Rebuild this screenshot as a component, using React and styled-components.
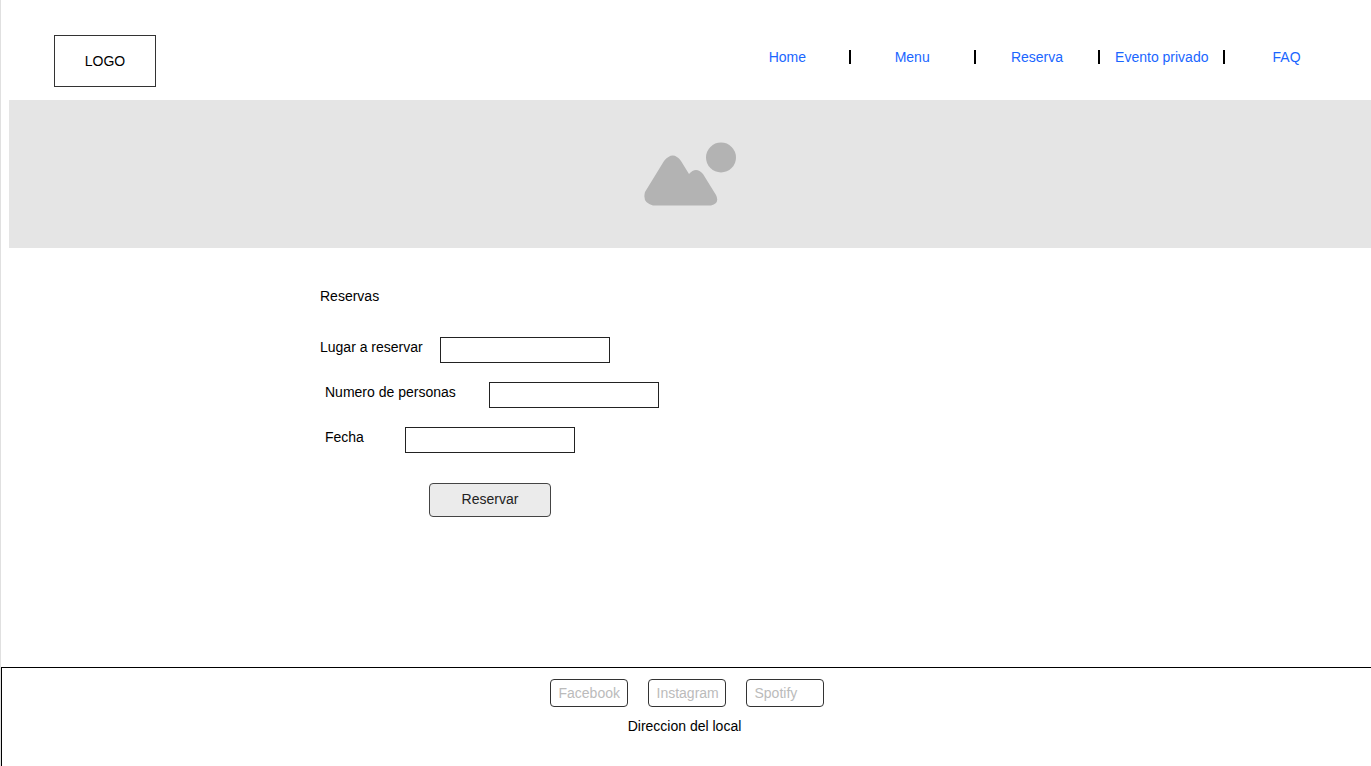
import React from "react";
import styled, { createGlobalStyle } from "styled-components";

const GlobalStyle = createGlobalStyle`
  *, *::before, *::after { box-sizing: border-box; }
  body {
    margin: 0;
    background: #fff;
    color: #000;
    font: 14px/20px "Liberation Sans", Arial, sans-serif;
  }
`;

const Page = styled.div`
  display: flex;
  flex-direction: column;
  min-height: 100vh;
  border-left: 1px solid #e0e0e0;
`;

const Header = styled.header`
  display: flex;
  justify-content: space-between;
  align-items: flex-start;
  height: 100px;
  padding: 35px 22px 0 53px;
`;

const Logo = styled.div`
  display: flex;
  align-items: center;
  justify-content: center;
  width: 102px;
  height: 52px;
  border: 1px solid #333;
`;

const NavList = styled.ul`
  display: flex;
  width: 624px;
  margin: 12px 0 0;
  padding: 0;
  list-style: none;
`;

const NavItem = styled.li`
  display: flex;
  flex: 1;
  align-items: center;
  justify-content: center;
  position: relative;

  & + &::before {
    content: "";
    position: absolute;
    left: -1px;
    width: 2px;
    height: 14px;
    background: #000;
  }
`;

const NavLink = styled.a`
  color: #1a66ff;
  text-decoration: none;
`;

const Banner = styled.div`
  display: flex;
  justify-content: center;
  height: 148px;
  margin-left: 8px;
  padding-top: 42px;
  background: #e5e5e5;
`;

const Main = styled.main`
  flex: 1;
  padding: 38px 20px 40px 319px;
`;

const Title = styled.h1`
  margin: 0 0 31px;
  font-size: 14px;
  font-weight: 400;
  line-height: 20px;
`;

const Form = styled.form`
  display: flex;
  flex-direction: column;
  align-items: flex-start;
  gap: 19px;
`;

const Field = styled.div`
  display: flex;
  align-items: flex-start;
  padding-left: ${(p) => (p.$indent ? 5 : 0)}px;
`;

const Label = styled.label`
  width: ${(p) => p.$width}px;
`;

const Input = styled.input`
  width: 170px;
  height: 26px;
  padding: 0 6px;
  border: 1px solid #222;
  border-radius: 0;
  background: #fff;
  font: inherit;
`;

const SubmitButton = styled.button`
  width: 122px;
  height: 34px;
  margin: 11px 0 0 109px;
  padding: 0 0 2px;
  border: 1px solid #444;
  border-radius: 4px;
  background: #ebebeb;
  color: #222;
  font: inherit;
`;

const Footer = styled.footer`
  display: flex;
  flex-direction: column;
  align-items: center;
  gap: 9px;
  min-height: 99px;
  padding-top: 11px;
  border-top: 1px solid #000;
  border-left: 1px solid #000;
`;

const SocialLinks = styled.div`
  display: flex;
  gap: 20px;
`;

const SocialLink = styled.a`
  width: 78px;
  height: 28px;
  padding: 3px 8px;
  border: 1px solid #333;
  border-radius: 4px;
  color: #bbb;
  text-decoration: none;
`;

const Address = styled.address`
  padding-right: 4px;
  font-style: normal;
`;

const navItems = ["Home", "Menu", "Reserva", "Evento privado", "FAQ"];
const socials = ["Facebook", "Instagram", "Spotify"];
const fields = [
  { id: "lugar", label: "Lugar a reservar", width: 120, indent: false },
  { id: "personas", label: "Numero de personas", width: 164, indent: true },
  { id: "fecha", label: "Fecha", width: 80, indent: true },
];

function LandscapeIcon() {
  return (
    <svg width="94" height="66" viewBox="0 0 94 66" fill="#b3b3b3" aria-hidden="true">
      <path d="M2 50 L21 19 Q30 8 38 19 L46 32 Q53 24 60 32 L73 53 Q77 61 68 63.500 L10 63.500 Q-1 61 2 50 Z" />
      <circle cx="78" cy="15.500" r="15" />
    </svg>
  );
}

export default function App() {
  return (
    <Page>
      <GlobalStyle />
      <Header>
        <Logo>LOGO</Logo>
        <nav>
          <NavList>
            {navItems.map((item) => (
              <NavItem key={item}>
                <NavLink href="#">{item}</NavLink>
              </NavItem>
            ))}
          </NavList>
        </nav>
      </Header>
      <Banner>
        <LandscapeIcon />
      </Banner>
      <Main>
        <Title>Reservas</Title>
        <Form onSubmit={(e) => e.preventDefault()}>
          {fields.map((f) => (
            <Field key={f.id} $indent={f.indent}>
              <Label htmlFor={f.id} $width={f.width}>{f.label}</Label>
              <Input id={f.id} type="text" />
            </Field>
          ))}
          <SubmitButton type="submit">Reservar</SubmitButton>
        </Form>
      </Main>
      <Footer>
        <SocialLinks>
          {socials.map((name) => (
            <SocialLink key={name} href="#">{name}</SocialLink>
          ))}
        </SocialLinks>
        <Address>Direccion del local</Address>
      </Footer>
    </Page>
  );
}
